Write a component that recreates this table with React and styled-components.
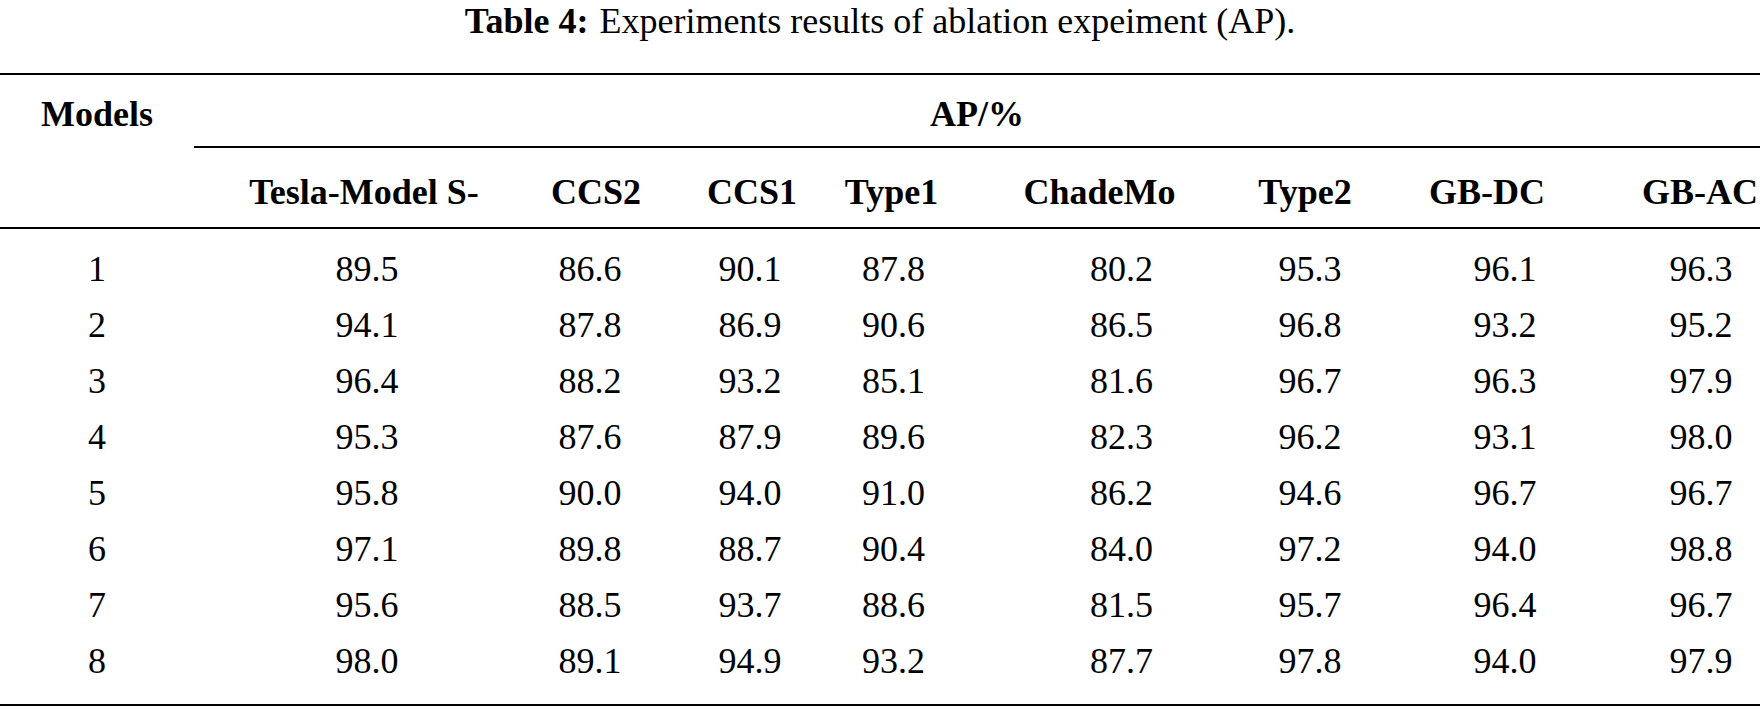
import React from "react";
import styled, { createGlobalStyle } from "styled-components";

// column tracks; header/data offsets (px) nudge each column to its place
const COLS = "194px 288px 194px 148px 173px 205px 194px 196px 168px";

const cols = [
  { name: "Models", hx: 0, dx: 0 },
  { name: "Tesla-Model S-", hx: 26, dx: 29 },
  { name: "CCS2", hx: 17, dx: 11 },
  { name: "CCS1", hx: 2, dx: 0 },
  { name: "Type1", hx: -19, dx: -17 },
  { name: "ChadeMo", hx: 0, dx: 22 },
  { name: "Type2", hx: 6, dx: 11 },
  { name: "GB-DC", hx: -7, dx: 11 },
  { name: "GB-AC", hx: 24, dx: 25 },
];

const rows = [
  ["1", "89.5", "86.6", "90.1", "87.8", "80.2", "95.3", "96.1", "96.3"],
  ["2", "94.1", "87.8", "86.9", "90.6", "86.5", "96.8", "93.2", "95.2"],
  ["3", "96.4", "88.2", "93.2", "85.1", "81.6", "96.7", "96.3", "97.9"],
  ["4", "95.3", "87.6", "87.9", "89.6", "82.3", "96.2", "93.1", "98.0"],
  ["5", "95.8", "90.0", "94.0", "91.0", "86.2", "94.6", "96.7", "96.7"],
  ["6", "97.1", "89.8", "88.7", "90.4", "84.0", "97.2", "94.0", "98.8"],
  ["7", "95.6", "88.5", "93.7", "88.6", "81.5", "95.7", "96.4", "96.7"],
  ["8", "98.0", "89.1", "94.9", "93.2", "87.7", "97.8", "94.0", "97.9"],
];

const GlobalStyle = createGlobalStyle`
  html, body {
    margin: 0;
    padding: 0;
    background: #fff;
  }
`;

const Page = styled.div`
  width: 1760px;
  height: 711px;
  overflow: hidden;
  font-family: "Liberation Serif", "Times New Roman", serif;
  color: #000;
`;

const Caption = styled.div`
  height: 42px;
  line-height: 42px;
  font-size: 36px;
  text-align: center;
  margin-bottom: 31px;
  white-space: nowrap;
`;

const Label = styled.b`
  font-weight: 700;
  margin-right: 11px;
`;

const Table = styled.div`
  border-top: 2px solid #000;
  border-bottom: 2px solid #000;
  font-size: 36px;
`;

const HeadGrid = styled.div`
  display: grid;
  grid-template-columns: ${COLS};
  grid-template-rows: 71px 2px 79px;
  font-weight: 700;
`;

// shifting the centre by s means padding 2s on one side
const Cell = styled.div`
  display: flex;
  align-items: center;
  justify-content: center;
  white-space: nowrap;
  line-height: 1;
  min-width: 0;
  padding-left: ${({ $s = 0 }) => (s => (s > 0 ? s * 2 : 0))($s)}px;
  padding-right: ${({ $s = 0 }) => (s => (s < 0 ? -s * 2 : 0))($s)}px;
`;

const HeadCell = styled(Cell)`
  grid-row: ${({ $row }) => $row};
  grid-column: ${({ $col }) => $col};
  padding-top: ${({ $top }) => $top}px;
`;

const MidRule = styled.div`
  grid-row: 2;
  grid-column: 2 / -1;
  background: #000;
`;

const Body = styled.div`
  border-top: 2px solid #000;
  padding: 12px 0 15px;
`;

const DataRow = styled.div`
  display: grid;
  grid-template-columns: ${COLS};
  height: 56px;
  align-items: center;
`;

export default function App() {
  return (
    <Page>
      <GlobalStyle />
      <Caption>
        <Label>Table 4:</Label>Experiments results of ablation expeiment (AP).
      </Caption>
      <Table>
        <HeadGrid>
          <HeadCell $row={1} $col={1} $top={7}>Models</HeadCell>
          <HeadCell $row={1} $col="2 / -1" $top={7}>AP/%</HeadCell>
          <MidRule />
          {cols.slice(1).map((c, i) => (
            <HeadCell key={c.name} $row={3} $col={i + 2} $top={9} $s={c.hx}>
              {c.name}
            </HeadCell>
          ))}
        </HeadGrid>
        <Body>
          {rows.map((r) => (
            <DataRow key={r[0]}>
              {r.map((v, i) => (
                <Cell key={i} $s={cols[i].dx}>
                  {v}
                </Cell>
              ))}
            </DataRow>
          ))}
        </Body>
      </Table>
    </Page>
  );
}
